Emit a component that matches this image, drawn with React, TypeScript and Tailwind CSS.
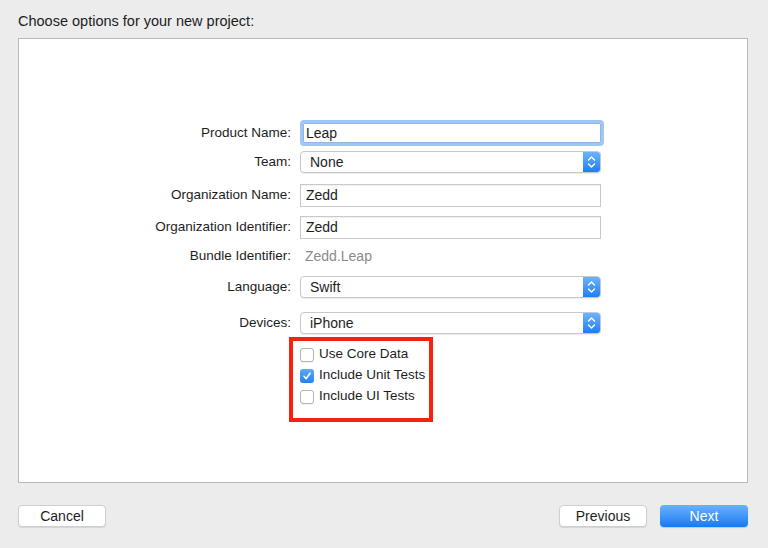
import React from 'react';

const font = { fontFamily: '"Liberation Sans", Arial, sans-serif' };

function Label({ children }: { children: React.ReactNode }) {
  return (
    <div className="w-[281px] shrink-0 pr-[9px] text-right text-[13.5px] text-[#1d1d1d]">
      {children}
    </div>
  );
}

function Chevrons() {
  return (
    <svg width="9" height="14" viewBox="0 0 9 14" fill="none" stroke="white" strokeWidth="1.4" strokeLinecap="round" strokeLinejoin="round">
      <path d="M1.5 5 L4.5 2 L7.5 5" />
      <path d="M1.5 9 L4.5 12 L7.5 9" />
    </svg>
  );
}

function Popup({ value }: { value: string }) {
  return (
    <div className="flex h-[22px] w-[301px] items-stretch overflow-hidden rounded-[4px] border border-[#c8c8c8] bg-white shadow-[0_1px_1px_rgba(0,0,0,0.08)]">
      <div className="flex flex-1 items-center pl-[9px] text-[14px] text-[#1d1d1d]">{value}</div>
      <div className="flex w-[17px] items-center justify-center bg-gradient-to-b from-[#6cb3fa] to-[#1a7ef5]">
        <Chevrons />
      </div>
    </div>
  );
}

function Field({ value, focused }: { value: string; focused?: boolean }) {
  if (focused) {
    return (
      <div className="flex h-[26px] w-[304px] items-center rounded-[4px] border-[3px] border-[#9fc7f4] bg-white p-0">
        <div className="flex h-full w-full items-center rounded-[1px] border border-[#8db8ea] pl-[2px] text-[14px] text-[#1d1d1d]">
          {value}
        </div>
      </div>
    );
  }
  return (
    <div className="flex h-[23px] w-[301px] items-center border border-[#c9c9c9] bg-white pl-[5px] text-[14px] text-[#1d1d1d] shadow-[inset_0_1px_0_rgba(0,0,0,0.05)]">
      {value}
    </div>
  );
}

function Checkbox({ checked, label }: { checked?: boolean; label: string }) {
  return (
    <div className="flex h-[21px] items-center">
      {checked ? (
        <div className="flex h-[14px] w-[14px] items-center justify-center rounded-[3px] bg-gradient-to-b from-[#5fa9f8] to-[#1f80f5]">
          <svg width="10" height="10" viewBox="0 0 10 10" fill="none" stroke="white" strokeWidth="1.6" strokeLinecap="round" strokeLinejoin="round">
            <path d="M2 5.3 L4.2 7.6 L8 2.2" />
          </svg>
        </div>
      ) : (
        <div className="h-[14px] w-[14px] rounded-[3px] border border-[#b4b4b4] bg-white shadow-[0_1px_1px_rgba(0,0,0,0.06)]" />
      )}
      <span className="ml-[5px] text-[13.5px] text-[#1d1d1d]">{label}</span>
    </div>
  );
}

function Button({ children, primary }: { children: React.ReactNode; primary?: boolean }) {
  return (
    <button
      className={
        primary
          ? 'flex h-[22px] w-[88px] items-center justify-center rounded-[4px] bg-gradient-to-b from-[#69b1fa] to-[#0f79f4] text-[14px] text-white shadow-[0_1px_1px_rgba(0,0,0,0.15)]'
          : 'flex h-[22px] w-[88px] items-center justify-center rounded-[4px] border border-[#cfcfcf] bg-white text-[14px] text-[#1d1d1d] shadow-[0_1px_1px_rgba(0,0,0,0.1)]'
      }
    >
      {children}
    </button>
  );
}

export default function App() {
  return (
    <div className="flex h-[548px] w-[768px] flex-col bg-[#ececec] pl-[18px] pr-[20px]" style={font}>
      <div className="pt-[12px] text-[14.5px] leading-[18px] text-[#1d1d1d]">Choose options for your new project:</div>

      <div className="mt-[8px] flex h-[445px] flex-col border border-[#b9b9b9] bg-white pt-[81px]">
        <div className="flex h-[26px] items-center">
          <Label>Product Name:</Label>
          <Field value="Leap" focused />
        </div>
        <div className="mt-[5px] flex h-[22px] items-center">
          <Label>Team:</Label>
          <Popup value="None" />
        </div>
        <div className="mt-[11px] flex h-[23px] items-center">
          <Label>Organization Name:</Label>
          <Field value="Zedd" />
        </div>
        <div className="mt-[9px] flex h-[23px] items-center">
          <Label>Organization Identifier:</Label>
          <Field value="Zedd" />
        </div>
        <div className="mt-[6px] flex h-[22px] items-center">
          <Label>Bundle Identifier:</Label>
          <div className="pl-[5px] text-[14px] text-[#8a8a8a]">Zedd.Leap</div>
        </div>
        <div className="mt-[9px] flex h-[22px] items-center">
          <Label>Language:</Label>
          <Popup value="Swift" />
        </div>
        <div className="mt-[14px] flex h-[22px] items-center">
          <Label>Devices:</Label>
          <Popup value="iPhone" />
        </div>
        <div className="ml-[270px] mt-[3px] h-[85px] w-[144px] border-[4px] border-[#f5220f] pl-[7px] pt-[3px]">
          <Checkbox label="Use Core Data" />
          <Checkbox label="Include Unit Tests" checked />
          <Checkbox label="Include UI Tests" />
        </div>
      </div>

      <div className="mt-[22px] flex items-center">
        <Button>Cancel</Button>
        <div className="flex-1" />
        <Button>Previous</Button>
        <div className="w-[13px]" />
        <Button primary>Next</Button>
      </div>
    </div>
  );
}
